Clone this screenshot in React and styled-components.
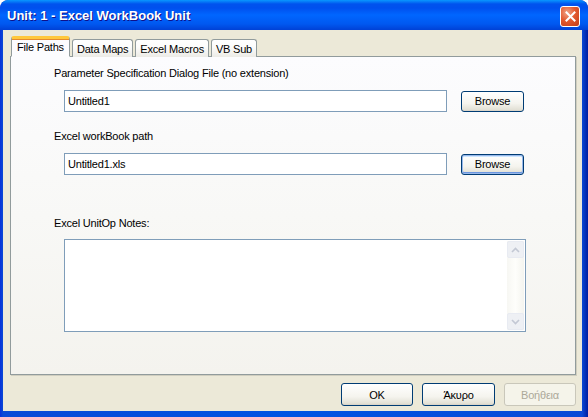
import React from "react";
import styled, { createGlobalStyle, css } from "styled-components";

const Global = createGlobalStyle`
  html, body { margin: 0; padding: 0; background: #ffffff; }
  body { font-family: "Liberation Sans", Arial, sans-serif; font-size: 11px; letter-spacing: -0.2px; color: #000; }
  * { box-sizing: border-box; }
`;

const Window = styled.div`
  width: 588px;
  height: 417px;
  display: flex;
  flex-direction: column;
  background: linear-gradient(to right, #0831d9 0px, #0a49d6 3px, #0054e3 50%, #0a49d6 calc(100% - 6px), #001ea0 100%);
  border-radius: 8px 8px 0 0;
  overflow: hidden;
`;

const TitleBar = styled.div`
  height: 30px;
  flex: none;
  display: flex;
  align-items: center;
  padding: 0 6px 0 7px;
  background: linear-gradient(to bottom, #0997ff 0px, #0053ee 4px, #0050ee 8px, #0066ff 50%, #0058f0 80%, #0041d6 100%);
  border-radius: 8px 8px 0 0;
`;

const Title = styled.div`
  flex: 1;
  color: #fff;
  font-family: "Liberation Sans", Arial, sans-serif;
  font-weight: bold;
  font-size: 13px;
  letter-spacing: 0px;
  text-shadow: 1px 1px 0 #0f1089;
  padding-top: 1px;
`;

const CloseBtn = styled.div`
  width: 20px;
  height: 21px;
  margin-top: 3px;
  margin-right: 2px;
  border: 1px solid #fff;
  border-radius: 3px;
  background: radial-gradient(circle at 35% 30%, #f0a488 0%, #e35a30 45%, #c13c17 100%);
  display: flex;
  align-items: center;
  justify-content: center;
`;

const Body = styled.div`
  flex: 1;
  margin: 0 6px 6px 3px;
  background: #ece9d8;
  display: flex;
  flex-direction: column;
  padding: 7px 6px 5px 7px;
`;

const TabStrip = styled.div`
  display: flex;
  align-items: flex-end;
  height: 20px;
  padding-left: 2px;
  position: relative;
  z-index: 1;
  margin-bottom: -1px;
`;

const Tab = styled.div`
  height: 18px;
  padding: 0 4px;
  margin-right: 2px;
  display: flex;
  align-items: center;
  border: 1px solid #919b9c;
  border-bottom: none;
  border-radius: 3px 3px 0 0;
  background: linear-gradient(to bottom, #ffffff 0%, #fcfcfb 40%, #ecebe6 100%);
  white-space: nowrap;
  ${(p) =>
    p.$active &&
    css`
      height: 21px;
      padding: 0 5px 1px 5px;
      margin-left: -1px;
      background: #fcfcfe;
      border-top: 3px solid #ffc83c;
      border-radius: 3px 3px 0 0;
      box-shadow: inset 0 1px 0 #e68b2c;
      border-top-color: #ffc83c;
      border-bottom: 1px solid #fcfcfe;
    `}
`;

const Panel = styled.div`
  height: 319px;
  border: 1px solid #919b9c;
  background: linear-gradient(to bottom, #fcfcfe 0%, #f8f8f6 50%, #f4f3ee 100%);
  box-shadow: 1px 1px 0 #d0cebf;
  padding: 10px 0 0 43px;
  display: flex;
  flex-direction: column;
`;

const Label = styled.div`
  height: 13px;
  line-height: 13px;
  margin-top: ${(p) => p.$mt || 0}px;
  white-space: nowrap;
`;

const FieldRow = styled.div`
  display: flex;
  align-items: center;
  margin-top: 10px;
  padding-left: 10px;
  gap: 14px;
`;

const Input = styled.div`
  width: 383px;
  height: 22px;
  border: 1px solid #7f9db9;
  background: #fff;
  padding: 0 3px;
  display: flex;
  align-items: center;
`;

const Button = styled.div`
  width: ${(p) => p.$w || 63}px;
  height: ${(p) => p.$h || 21}px;
  border: 1px solid #003c74;
  border-radius: 3px;
  background: linear-gradient(to bottom, #ffffff 0%, #f5f4ee 60%, #e3e1d6 92%, #d6d0c5 100%);
  display: flex;
  align-items: center;
  justify-content: center;
  color: #000;
  ${(p) =>
    p.$focus &&
    css`
      box-shadow: inset 0 0 0 1px #98b8ea, inset 0 -1px 0 1px #6b96e0, inset 0 1px 0 1px #cee7ff;
    `}
  ${(p) =>
    p.$disabled &&
    css`
      border-color: #c9c7ba;
      background: #f5f4ea;
      color: #aca899;
    `}
`;

const NotesBox = styled.div`
  margin-top: 9px;
  margin-left: 10px;
  width: 462px;
  height: 93px;
  border: 1px solid #7f9db9;
  background: #fff;
  display: flex;
  justify-content: flex-end;
  padding: 1px;
`;

const ScrollBar = styled.div`
  width: 17px;
  display: flex;
  flex-direction: column;
  justify-content: space-between;
  background: linear-gradient(to right, #f7f7f3, #fefefb 50%, #f4f4ef);
`;

const ScrollArrow = styled.div`
  width: 17px;
  height: 17px;
  border: 1px solid #e8ebf2;
  border-radius: 2px;
  background: #eef0f4;
  display: flex;
  align-items: center;
  justify-content: center;
`;

const Footer = styled.div`
  display: flex;
  justify-content: flex-end;
  gap: 9px;
  margin-top: 8px;
`;

const Chevron = ({ up }) => (
  <svg width="9" height="6" viewBox="0 0 9 6">
    <path
      d={up ? "M1 5 L4.5 1.5 L8 5" : "M1 1 L4.5 4.5 L8 1"}
      fill="none"
      stroke="#c3c8d4"
      strokeWidth="1.6"
    />
  </svg>
);

export default function App() {
  return (
    <>
      <Global />
      <Window>
        <TitleBar>
          <Title>Unit: 1 - Excel WorkBook Unit</Title>
          <CloseBtn>
            <svg width="13" height="13" viewBox="0 0 13 13">
              <path d="M2.5 2.5 L10.5 10.5 M10.5 2.5 L2.5 10.5" stroke="#fff" strokeWidth="2" strokeLinecap="square" />
            </svg>
          </CloseBtn>
        </TitleBar>
        <Body>
          <TabStrip>
            <Tab $active>File Paths</Tab>
            <Tab>Data Maps</Tab>
            <Tab>Excel Macros</Tab>
            <Tab>VB Sub</Tab>
          </TabStrip>
          <Panel>
            <Label>Parameter Specification Dialog File (no extension)</Label>
            <FieldRow>
              <Input>Untitled1</Input>
              <Button>Browse</Button>
            </FieldRow>
            <Label $mt={18}>Excel workBook path</Label>
            <FieldRow>
              <Input>Untitled1.xls</Input>
              <Button $focus>Browse</Button>
            </FieldRow>
            <Label $mt={42}>Excel UnitOp Notes:</Label>
            <NotesBox>
              <ScrollBar>
                <ScrollArrow><Chevron up /></ScrollArrow>
                <ScrollArrow><Chevron /></ScrollArrow>
              </ScrollBar>
            </NotesBox>
          </Panel>
          <Footer>
            <Button $w={72} $h={23}>OK</Button>
            <Button $w={73} $h={23}>Άκυρο</Button>
            <Button $w={72} $h={23} $disabled>Βοήθεια</Button>
          </Footer>
        </Body>
      </Window>
    </>
  );
}
